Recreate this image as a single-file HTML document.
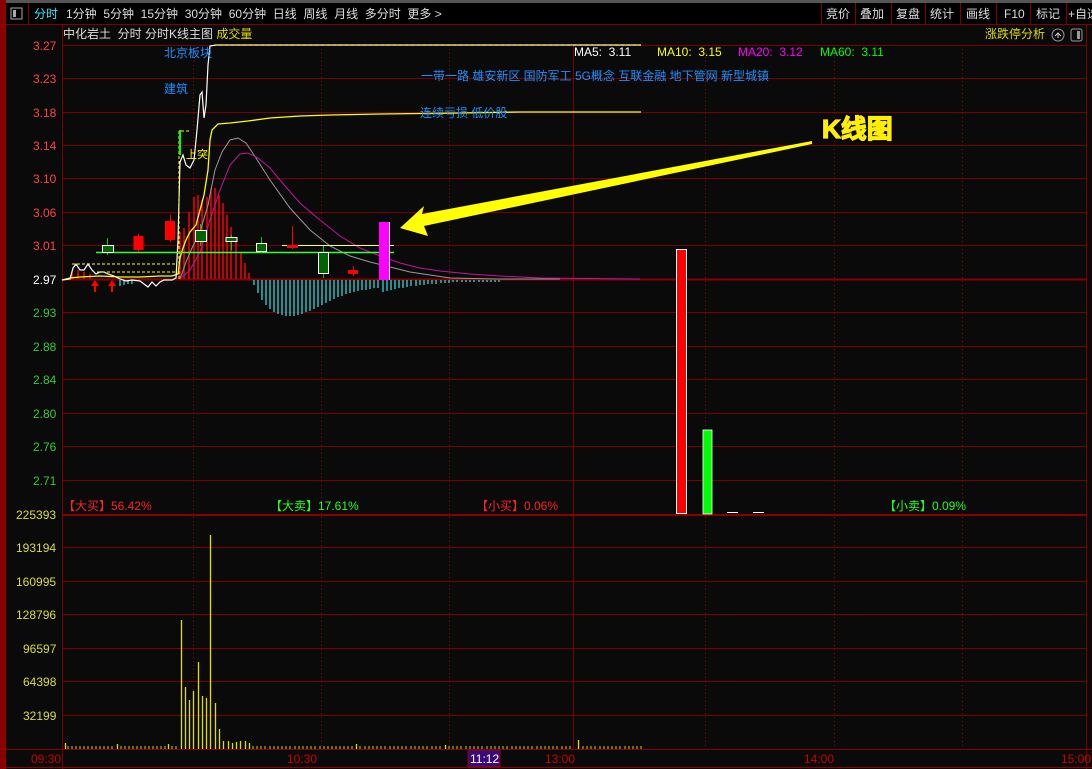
<!DOCTYPE html>
<html><head><meta charset="utf-8"><style>
*{margin:0;padding:0}
body{width:1092px;height:769px;background:#0a0a0a;overflow:hidden;position:relative;font-family:"Liberation Sans","Noto Sans CJK SC",sans-serif;font-size:12px}
.t{position:absolute;white-space:nowrap;line-height:14px}
</style></head><body>
<svg width="1092" height="769" style="position:absolute;left:0;top:0" font-family="Liberation Sans, Noto Sans CJK SC, sans-serif" font-size="12">
<rect x="0" y="0" width="1092" height="3" fill="#555"/>
<rect x="0" y="3" width="1092" height="21" fill="#000"/>
<line x1="0" y1="24.5" x2="1092" y2="24.5" stroke="#800000"/>
<line x1="28.5" y1="3" x2="28.5" y2="24" stroke="#800000"/>
<rect x="0" y="0" width="6" height="769" fill="#8a0000"/>
<rect x="11" y="8" width="11" height="11" fill="none" stroke="#aaa"/><rect x="13" y="10" width="3" height="7" fill="#aaa"/>
<g stroke="#800000"><line x1="821.5" y1="3" x2="821.5" y2="24"/><line x1="855.5" y1="3" x2="855.5" y2="24"/><line x1="891.5" y1="3" x2="891.5" y2="24"/><line x1="925.5" y1="3" x2="925.5" y2="24"/><line x1="960.5" y1="3" x2="960.5" y2="24"/><line x1="996.5" y1="3" x2="996.5" y2="24"/><line x1="1030.5" y1="3" x2="1030.5" y2="24"/><line x1="1066.5" y1="3" x2="1066.5" y2="24"/></g>
<g stroke="#7a0000">
<line x1="62" y1="45.5" x2="1086" y2="45.5"/><line x1="62" y1="78.5" x2="1086" y2="78.5"/><line x1="62" y1="112.5" x2="1086" y2="112.5"/><line x1="62" y1="145.5" x2="1086" y2="145.5"/><line x1="62" y1="178.5" x2="1086" y2="178.5"/><line x1="62" y1="212.5" x2="1086" y2="212.5"/><line x1="62" y1="245.5" x2="1086" y2="245.5"/><line x1="62" y1="312.5" x2="1086" y2="312.5"/><line x1="62" y1="346.5" x2="1086" y2="346.5"/><line x1="62" y1="379.5" x2="1086" y2="379.5"/><line x1="62" y1="413.5" x2="1086" y2="413.5"/><line x1="62" y1="446.5" x2="1086" y2="446.5"/><line x1="62" y1="480.5" x2="1086" y2="480.5"/>
<line x1="62" y1="547.5" x2="1086" y2="547.5"/><line x1="62" y1="581.5" x2="1086" y2="581.5"/><line x1="62" y1="614.5" x2="1086" y2="614.5"/><line x1="62" y1="648.5" x2="1086" y2="648.5"/><line x1="62" y1="681.5" x2="1086" y2="681.5"/><line x1="62" y1="715.5" x2="1086" y2="715.5"/>
<line x1="62.5" y1="25" x2="62.5" y2="769"/><line x1="1086.5" y1="25" x2="1086.5" y2="769"/><line x1="573.5" y1="45" x2="573.5" y2="749"/>
</g>
<line x1="62" y1="279.5" x2="1086" y2="279.5" stroke="#8a0000" stroke-width="2"/>
<line x1="62" y1="515" x2="1086" y2="515" stroke="#8a0000" stroke-width="2"/>
<line x1="0" y1="749.5" x2="1092" y2="749.5" stroke="#8a0000"/>
<line x1="0" y1="767.5" x2="1092" y2="767.5" stroke="#8a0000"/>
<g stroke="#a00000" stroke-dasharray="1,3"><line x1="193.5" y1="45" x2="193.5" y2="749"/><line x1="321.5" y1="45" x2="321.5" y2="749"/><line x1="449.5" y1="45" x2="449.5" y2="749"/><line x1="705.5" y1="45" x2="705.5" y2="749"/><line x1="834.5" y1="45" x2="834.5" y2="749"/><line x1="962.5" y1="45" x2="962.5" y2="749"/></g>
<g stroke="#f00" stroke-width="1.5">
<line x1="180" y1="279" x2="180" y2="232"/><line x1="184" y1="279" x2="184" y2="228"/><line x1="189" y1="279" x2="189" y2="212"/><line x1="194" y1="279" x2="194" y2="197"/><line x1="198" y1="279" x2="198" y2="195"/><line x1="202" y1="279" x2="202" y2="200"/><line x1="207" y1="279" x2="207" y2="197"/><line x1="211" y1="279" x2="211" y2="188"/><line x1="215" y1="279" x2="215" y2="188"/><line x1="219" y1="279" x2="219" y2="195"/><line x1="223" y1="279" x2="223" y2="203"/><line x1="227" y1="279" x2="227" y2="215"/><line x1="231" y1="279" x2="231" y2="227"/><line x1="236" y1="279" x2="236" y2="240"/><line x1="241" y1="279" x2="241" y2="253"/><line x1="245" y1="279" x2="245" y2="263"/><line x1="249" y1="279" x2="249" y2="273"/>
<line x1="72" y1="279" x2="72" y2="272"/><line x1="78" y1="279" x2="78" y2="270"/><line x1="84" y1="279" x2="84" y2="272"/><line x1="90" y1="279" x2="90" y2="274"/>
</g>
<g stroke="#2ee8f0" stroke-width="1.2">
<line x1="254" y1="280" x2="254" y2="285"/><line x1="258" y1="280" x2="258" y2="293"/><line x1="262" y1="280" x2="262" y2="300"/><line x1="266" y1="280" x2="266" y2="305"/><line x1="270" y1="280" x2="270" y2="309"/><line x1="274" y1="280" x2="274" y2="312"/><line x1="278" y1="280" x2="278" y2="314"/><line x1="282" y1="280" x2="282" y2="315"/><line x1="286" y1="280" x2="286" y2="316"/><line x1="290" y1="280" x2="290" y2="316"/><line x1="294" y1="280" x2="294" y2="316"/><line x1="298" y1="280" x2="298" y2="315"/><line x1="302" y1="280" x2="302" y2="314"/><line x1="306" y1="280" x2="306" y2="312"/><line x1="310" y1="280" x2="310" y2="311"/><line x1="314" y1="280" x2="314" y2="309"/><line x1="318" y1="280" x2="318" y2="307"/><line x1="322" y1="280" x2="322" y2="305"/><line x1="326" y1="280" x2="326" y2="303"/><line x1="330" y1="280" x2="330" y2="301"/><line x1="334" y1="280" x2="334" y2="299"/><line x1="338" y1="280" x2="338" y2="297"/><line x1="342" y1="280" x2="342" y2="296"/><line x1="346" y1="280" x2="346" y2="294"/><line x1="350" y1="280" x2="350" y2="293"/><line x1="354" y1="280" x2="354" y2="292"/><line x1="358" y1="280" x2="358" y2="291"/><line x1="362" y1="280" x2="362" y2="290"/><line x1="366" y1="280" x2="366" y2="290"/><line x1="370" y1="280" x2="370" y2="289"/><line x1="374" y1="280" x2="374" y2="288"/><line x1="378" y1="280" x2="378" y2="288"/><line x1="383" y1="280" x2="383" y2="292"/><line x1="387" y1="280" x2="387" y2="291"/><line x1="391" y1="280" x2="391" y2="290"/><line x1="395" y1="280" x2="395" y2="289"/><line x1="399" y1="280" x2="399" y2="288"/><line x1="403" y1="280" x2="403" y2="288"/><line x1="407" y1="280" x2="407" y2="287"/><line x1="411" y1="280" x2="411" y2="286"/><line x1="416" y1="280" x2="416" y2="286"/><line x1="420" y1="280" x2="420" y2="285"/><line x1="424" y1="280" x2="424" y2="285"/><line x1="428" y1="280" x2="428" y2="284"/><line x1="432" y1="280" x2="432" y2="284"/><line x1="436" y1="280" x2="436" y2="284"/><line x1="441" y1="280" x2="441" y2="283"/><line x1="445" y1="280" x2="445" y2="283"/><line x1="449" y1="280" x2="449" y2="283"/><line x1="453" y1="280" x2="453" y2="282"/><line x1="457" y1="280" x2="457" y2="282"/><line x1="462" y1="280" x2="462" y2="282"/><line x1="466" y1="280" x2="466" y2="282"/><line x1="470" y1="280" x2="470" y2="282"/><line x1="474" y1="280" x2="474" y2="282"/><line x1="479" y1="280" x2="479" y2="282"/><line x1="483" y1="280" x2="483" y2="282"/><line x1="487" y1="280" x2="487" y2="282"/><line x1="491" y1="280" x2="491" y2="282"/><line x1="495" y1="280" x2="495" y2="282"/><line x1="499" y1="280" x2="499" y2="282"/><line x1="120" y1="280" x2="120" y2="286"/><line x1="124" y1="280" x2="124" y2="285"/><line x1="128" y1="280" x2="128" y2="284"/><line x1="132" y1="280" x2="132" y2="284"/>
</g>
<polyline fill="none" stroke="#999" stroke-width="1" points="180,279 186,262 192,248 200,232 208,205 215,170 222,152 230,140 238,138 246,143 256,158 270,180 290,208 310,230 330,246 350,256 370,262 390,267 410,272 430,275 450,278 500,279 560,279"/>
<polyline fill="none" stroke="#c0169c" stroke-width="1" points="180,279 190,270 200,252 210,220 220,190 230,165 240,154 248,153 258,158 270,168 285,186 300,203 320,220 340,236 360,248 380,256 400,263 420,268 440,271 470,274 500,276 540,278 640,279"/>
<polyline fill="none" stroke="#ffff00" stroke-width="1.3" points="62,280 70,278 80,277 100,276 120,277 140,277 160,276 172,276 178,274 180,258 183,248 186,240 190,232 196,225 200,210 204,195 208,170 210,140 212,130 218,124 230,123 248,121 270,118 300,116 330,115 380,114 460,113 520,112 641,112"/>
<polyline fill="none" stroke="#fff" stroke-width="1.2" points="62,280 70,279 73,268 76,264 80,270 84,270 88,264 92,270 96,274 100,272 104,272 108,274 114,276 120,279 126,281 132,280 140,281 144,284 148,287 152,282 156,286 160,282 164,280 172,280 176,278 178,240 180,162 183,155 186,165 190,168 194,160 197,130 200,95 202,92 204,118 206,105 208,65 210,46 216,45 641,45"/>
<line x1="216" y1="45" x2="641" y2="45" stroke="#ff0" stroke-dasharray="3,3"/>
<g stroke="#ff0" fill="none" stroke-dasharray="3,2"><polyline points="72,264 176,264"/><polyline points="179,279 179,131 190,131"/><polyline points="97,272 175,272"/></g>
<rect x="179" y="130" width="2" height="25" fill="#0f0"/>
<text x="186" y="158" fill="#ff0" font-size="11">上突</text>
<line x1="96" y1="252.5" x2="394" y2="252.5" stroke="#3f3" stroke-width="1.5"/>
<line x1="282" y1="245.5" x2="394" y2="245.5" stroke="#ff6" stroke-width="1"/>
<g stroke="#fff" stroke-width="1">
<line x1="107.5" y1="238" x2="107.5" y2="255" stroke="#0c0"/><rect x="102.5" y="245.5" width="11" height="7" fill="#006400"/>
<line x1="138.5" y1="234" x2="138.5" y2="252" stroke="#f00"/><rect x="133.5" y="236" width="10" height="14" fill="#f00" stroke="none"/>
<line x1="170.5" y1="215" x2="170.5" y2="242" stroke="#f00"/><rect x="165" y="221" width="10" height="19" fill="#f00" stroke="none"/>
<line x1="200.5" y1="224" x2="200.5" y2="246" stroke="#0c0"/><rect x="195.5" y="230.5" width="11" height="11" fill="#006400"/>
<line x1="231.5" y1="235" x2="231.5" y2="250" stroke="#0c0"/><rect x="226" y="237.5" width="11" height="4" fill="#006400"/>
<line x1="261.5" y1="237" x2="261.5" y2="253" stroke="#0c0"/><rect x="256.5" y="243.5" width="10" height="8" fill="#006400"/>
<line x1="292.5" y1="226" x2="292.5" y2="249" stroke="#f00"/><rect x="287" y="245" width="11" height="3" fill="#f00" stroke="none"/>
<line x1="323.5" y1="246" x2="323.5" y2="278" stroke="#0c0"/><rect x="318.5" y="252.5" width="10" height="21" fill="#006400"/>
<line x1="353.5" y1="266" x2="353.5" y2="276" stroke="#f00"/><rect x="348" y="270" width="10" height="4" fill="#f00" stroke="none"/>
<rect x="379" y="222" width="10" height="58" fill="#f0f" stroke="none"/><line x1="389.5" y1="222" x2="389.5" y2="280" stroke="#fff"/>
</g>
<g fill="#f00"><polygon points="95,280 91,286 94,286 94,292 96,292 96,286 99,286"/><polygon points="112,280 108,286 111,286 111,292 113,292 113,286 116,286"/></g>
<polygon points="812,141 422,214 424,206 400,228 428,236 424,226 812,144" fill="#ff0"/>
<text x="822" y="138" font-size="26" font-weight="bold" fill="none" stroke="#000" stroke-width="4">K线图</text>
<text x="822" y="138" font-size="26" font-weight="bold" fill="#ffee00" stroke="#ffee00" stroke-width="1.3">K线图</text>
<rect x="676.5" y="249.5" width="10" height="264" fill="#f00" stroke="#fff"/>
<rect x="703" y="430" width="9" height="84" fill="#0f0" stroke="#fff" stroke-width="0.8"/>
<line x1="727" y1="512.5" x2="738" y2="512.5" stroke="#fff"/><line x1="753" y1="512.5" x2="764" y2="512.5" stroke="#fff"/>
<g stroke="#e0e000" stroke-width="1.3">
<line x1="181.5" y1="749" x2="181.5" y2="620"/><line x1="185.5" y1="749" x2="185.5" y2="687"/><line x1="189.5" y1="749" x2="189.5" y2="700"/><line x1="193.5" y1="749" x2="193.5" y2="691"/><line x1="198.5" y1="749" x2="198.5" y2="662"/><line x1="202.5" y1="749" x2="202.5" y2="696"/><line x1="206.5" y1="749" x2="206.5" y2="698"/><line x1="210.5" y1="749" x2="210.5" y2="535"/><line x1="215.5" y1="749" x2="215.5" y2="703"/><line x1="219.5" y1="749" x2="219.5" y2="729"/><line x1="223.5" y1="749" x2="223.5" y2="741"/><line x1="228.5" y1="749" x2="228.5" y2="741"/><line x1="232.5" y1="749" x2="232.5" y2="743"/><line x1="236.5" y1="749" x2="236.5" y2="742"/><line x1="240.5" y1="749" x2="240.5" y2="741"/><line x1="245.5" y1="749" x2="245.5" y2="741"/><line x1="249.5" y1="749" x2="249.5" y2="743"/>
<line x1="65.5" y1="749" x2="65.5" y2="743"/><line x1="117.5" y1="749" x2="117.5" y2="744"/><line x1="168.5" y1="749" x2="168.5" y2="744"/><line x1="356.5" y1="749" x2="356.5" y2="744"/><line x1="578.5" y1="749" x2="578.5" y2="740"/><line x1="445.5" y1="749" x2="445.5" y2="745"/>
</g>
<path d="M68 749v-3M72 749v-3M76 749v-3M80 749v-3M84 749v-3M88 749v-3M92 749v-3M96 749v-3M100 749v-3M104 749v-3M108 749v-3M112 749v-3M121 749v-3M125 749v-3M129 749v-3M133 749v-3M137 749v-3M141 749v-3M145 749v-3M149 749v-3M153 749v-3M157 749v-3M161 749v-3M165 749v-3M172 749v-3M176 749v-3M253 749v-3M257 749v-3M261 749v-3M265 749v-3M270 749v-3M274 749v-3M278 749v-3M282 749v-3M286 749v-3M290 749v-3M295 749v-3M299 749v-3M303 749v-3M307 749v-3M311 749v-3M315 749v-3M320 749v-3M324 749v-3M328 749v-3M332 749v-3M336 749v-3M340 749v-3M344 749v-3M348 749v-3M352 749v-3M360 749v-3M365 749v-3M369 749v-3M373 749v-3M377 749v-3M381 749v-3M385 749v-3M390 749v-3M394 749v-3M398 749v-3M402 749v-3M406 749v-3M411 749v-3M415 749v-3M419 749v-3M423 749v-3M427 749v-3M432 749v-3M436 749v-3M440 749v-3M449 749v-3M453 749v-3M457 749v-3M461 749v-3M466 749v-3M470 749v-3M474 749v-3M478 749v-3M482 749v-3M487 749v-3M491 749v-3M495 749v-3M499 749v-3M503 749v-3M507 749v-3M512 749v-3M516 749v-3M520 749v-3M524 749v-3M528 749v-3M532 749v-3M537 749v-3M541 749v-3M545 749v-3M549 749v-3M553 749v-3M557 749v-3M562 749v-3M566 749v-3M570 749v-3M583 749v-3M587 749v-3M591 749v-3M595 749v-3M600 749v-3M604 749v-3M608 749v-3M612 749v-3M616 749v-3M620 749v-3M625 749v-3M629 749v-3M633 749v-3M637 749v-3M641 749v-3" stroke="#d0d000" stroke-width="1"/>
<circle cx="1058" cy="35" r="6" fill="none" stroke="#999"/><path d="M1055 36l3-3 3 3M1058 33v5" stroke="#ccc" fill="none"/>
<rect x="1071" y="29" width="11" height="12" rx="2" fill="none" stroke="#999"/><rect x="1077" y="31" width="3" height="8" fill="#999"/>
<rect x="468" y="750" width="32" height="17" fill="#3a0a7a" stroke="#900"/>
</svg>
<div class="t" style="left:34px;top:7px;color:#3ef">分时</div>
<div class="t" style="left:66px;top:7px;color:#ddd">1分钟&nbsp; 5分钟&nbsp; 15分钟&nbsp; 30分钟&nbsp; 60分钟&nbsp; 日线&nbsp; 周线&nbsp; 月线&nbsp; 多分时&nbsp; 更多 &gt;</div>
<div class="t" style="left:826px;top:7px;color:#ddd">竞价</div>
<div class="t" style="left:860px;top:7px;color:#ddd">叠加</div>
<div class="t" style="left:896px;top:7px;color:#ddd">复盘</div>
<div class="t" style="left:930px;top:7px;color:#ddd">统计</div>
<div class="t" style="left:966px;top:7px;color:#ddd">画线</div>
<div class="t" style="left:1004px;top:7px;color:#ddd">F10</div>
<div class="t" style="left:1036px;top:7px;color:#ddd">标记</div>
<div class="t" style="left:1068px;top:7px;color:#ddd">+自选</div>
<div class="t" style="left:63px;top:27px;color:#ddd">中化岩土&nbsp; 分时 分时K线主图 <span style="color:#dd0">成交量</span></div>
<div class="t" style="left:985px;top:27px;color:#dd0">涨跌停分析</div>
<div class="t" style="left:574px;top:45px;color:#fff">MA5:&nbsp; 3.11</div>
<div class="t" style="left:657px;top:45px;color:#ff0">MA10:&nbsp; 3.15</div>
<div class="t" style="left:738px;top:45px;color:#f0f">MA20:&nbsp; 3.12</div>
<div class="t" style="left:820px;top:45px;color:#0f0">MA60:&nbsp; 3.11</div>
<div class="t" style="left:164px;top:46px;color:#1e90ff">北京板块</div>
<div class="t" style="left:164px;top:82px;color:#1e90ff">建筑</div>
<div class="t" style="left:421px;top:69px;color:#1e90ff">一带一路 雄安新区 国防军工 5G概念 互联金融 地下管网 新型城镇</div>
<div class="t" style="left:420px;top:106px;color:#1e90ff">连续亏损 低价股</div>
<div class="t" style="left:33px;top:39px;color:#f44">3.27</div>
<div class="t" style="left:33px;top:72px;color:#f44">3.23</div>
<div class="t" style="left:33px;top:106px;color:#f44">3.18</div>
<div class="t" style="left:33px;top:139px;color:#f44">3.14</div>
<div class="t" style="left:33px;top:172px;color:#f44">3.10</div>
<div class="t" style="left:33px;top:206px;color:#f44">3.06</div>
<div class="t" style="left:33px;top:239px;color:#f44">3.01</div>
<div class="t" style="left:33px;top:273px;color:#fff">2.97</div>
<div class="t" style="left:33px;top:306px;color:#3c3">2.93</div>
<div class="t" style="left:33px;top:340px;color:#3c3">2.88</div>
<div class="t" style="left:33px;top:373px;color:#3c3">2.84</div>
<div class="t" style="left:33px;top:407px;color:#3c3">2.80</div>
<div class="t" style="left:33px;top:440px;color:#3c3">2.76</div>
<div class="t" style="left:33px;top:474px;color:#3c3">2.71</div>
<div class="t" style="left:63px;top:499px;color:#f22">【大买】56.42%</div>
<div class="t" style="left:270px;top:499px;color:#2f2">【大卖】17.61%</div>
<div class="t" style="left:476px;top:499px;color:#f22">【小买】0.06%</div>
<div class="t" style="left:884px;top:499px;color:#2f2">【小卖】0.09%</div>
<div class="t" style="left:16px;top:508px;color:#dd3">225393</div>
<div class="t" style="left:16px;top:541px;color:#dd3">193194</div>
<div class="t" style="left:16px;top:575px;color:#dd3">160995</div>
<div class="t" style="left:16px;top:608px;color:#dd3">128796</div>
<div class="t" style="left:23px;top:642px;color:#dd3">96597</div>
<div class="t" style="left:23px;top:675px;color:#dd3">64398</div>
<div class="t" style="left:23px;top:709px;color:#dd3">32199</div>
<div class="t" style="left:31px;top:752px;color:#c00">09:30</div>
<div class="t" style="left:287px;top:752px;color:#c00">10:30</div>
<div class="t" style="left:470px;top:752px;color:#fff">11:12</div>
<div class="t" style="left:545px;top:752px;color:#c00">13:00</div>
<div class="t" style="left:804px;top:752px;color:#c00">14:00</div>
<div class="t" style="left:1061px;top:752px;color:#c00">15:00</div>
</body></html>
